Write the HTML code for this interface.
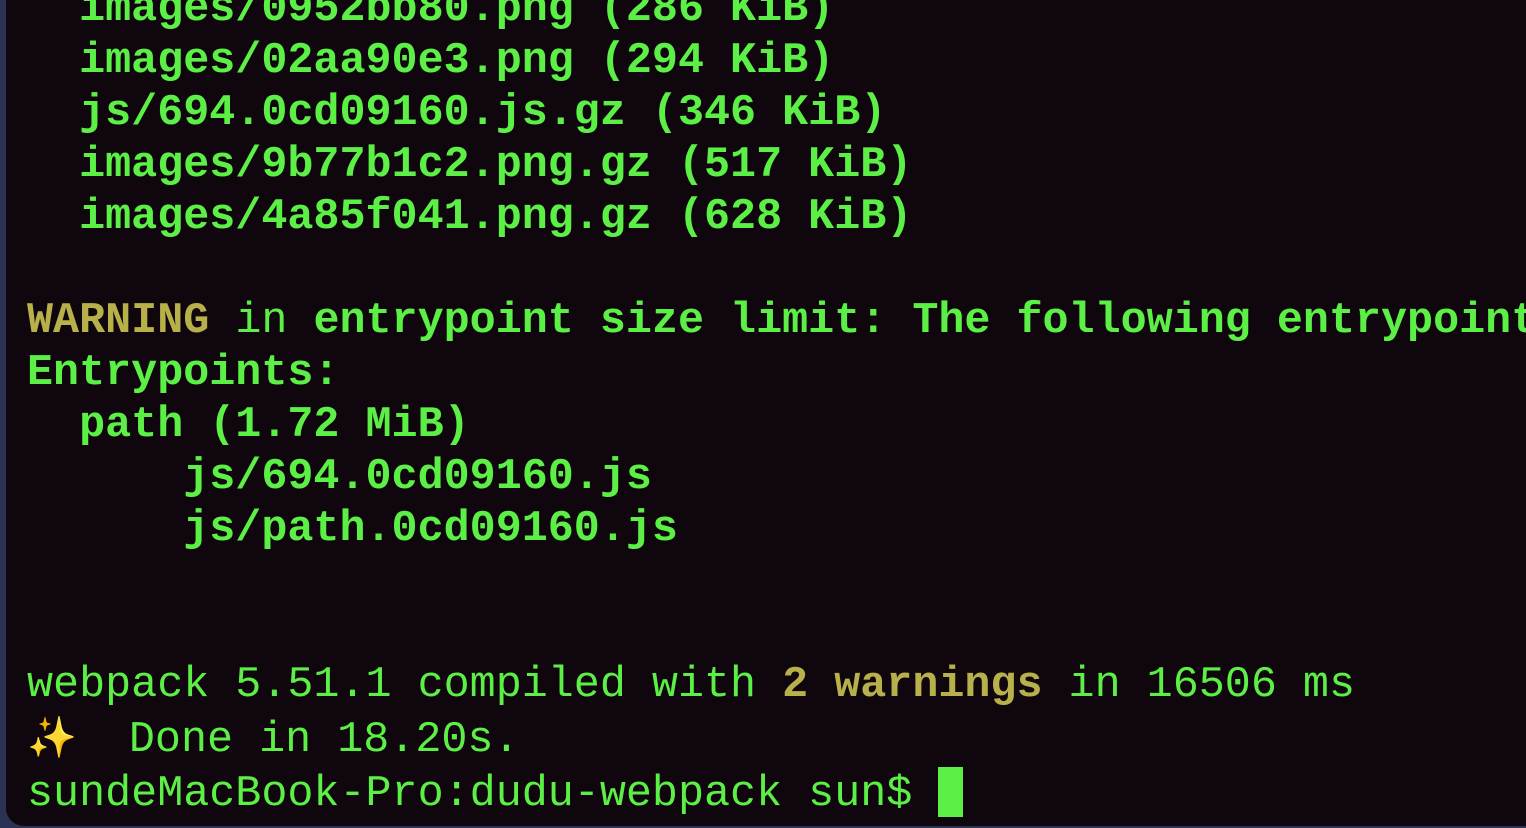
<!DOCTYPE html>
<html><head><meta charset="utf-8"><style>
html,body{margin:0;padding:0;width:1526px;height:828px;overflow:hidden;background:#2a3352;}
#t{position:absolute;left:6px;top:0;width:1530px;height:826px;background:#0f070d;border-bottom-left-radius:18px;overflow:hidden;}
pre{position:absolute;left:21px;top:-16px;margin:0;font-family:"Liberation Mono",monospace;font-size:43.4px;line-height:52px;color:#5cf046;white-space:pre;}
b{font-weight:bold;}
.y{color:#b8b04a;}
.c{display:inline-block;width:25px;height:50px;background:#5cf046;vertical-align:-12px;}
.s{color:#f5c542;font-family:"DejaVu Sans",sans-serif;font-size:40px;}
</style></head><body><div id="t"><pre><b>  images/0952bb80.png (286 KiB)
  images/02aa90e3.png (294 KiB)
  js/694.0cd09160.js.gz (346 KiB)
  images/9b77b1c2.png.gz (517 KiB)
  images/4a85f041.png.gz (628 KiB)</b>

<b class="y">WARNING</b> in <b>entrypoint size limit: The following entrypoint(s)</b>
<b>Entrypoints:
  path (1.72 MiB)
      js/694.0cd09160.js
      js/path.0cd09160.js</b>


webpack 5.51.1 compiled with <b class="y">2 warnings</b> in 16506 ms
<span class="s">✨</span>  Done in 18.20s.
sundeMacBook-Pro:dudu-webpack sun$ <span class="c"></span></pre></div></body></html>
